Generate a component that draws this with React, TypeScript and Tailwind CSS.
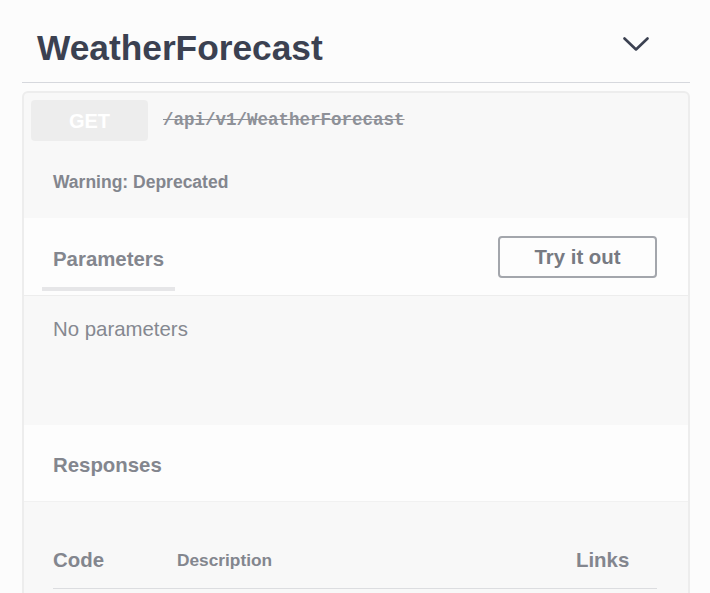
const Chevron = () => (
  <svg width="26" height="14" viewBox="0 0 26 14" fill="none">
    <polyline points="1.5,1.5 13,12.5 24.5,1.5" stroke="#3b4151" strokeWidth="2.6" strokeLinecap="round" strokeLinejoin="round" />
  </svg>
);

const App = () => {
  return (
    <div className="min-h-screen bg-[#fcfcfc] font-['Liberation_Sans',Arial,sans-serif]">
      <div className="mx-[22px] w-[668px]">
        {/* Tag header */}
        <div className="flex justify-between items-start h-[83px] pt-[30px] pl-[15px] pr-[41px] border-b border-[#d6d8dd]">
          <h3 className="text-[35.3px] leading-none font-bold text-[#3b4151]">WeatherForecast</h3>
          <div className="mt-[7px]">
            <Chevron />
          </div>
        </div>

        {/* Deprecated operation block */}
        <div className="mt-[8px] border-2 border-[#ededed] rounded-[6px] bg-[#f8f8f8] overflow-hidden">
          <div className="flex items-center pl-[7px] pt-[7px] pb-[9px]">
            <span className="flex items-center justify-center w-[117px] h-[41px] rounded-[4px] bg-[#ededed] text-white text-[20px] font-bold">
              GET
            </span>
            <span className="ml-[15px] font-['Liberation_Mono',monospace] font-bold text-[17.5px] text-[#8e9198] line-through">
              /api/v1/WeatherForecast
            </span>
          </div>

          <div className="h-[68px] pl-[29px] pt-[22px]">
            <p className="text-[17.5px] leading-[20px] font-bold text-[#83868e]">Warning: Deprecated</p>
          </div>

          {/* Parameters header */}
          <div className="flex justify-between h-[78px] pl-[18px] pr-[31px] bg-[#fdfdfd] border-b border-[#ededed]">
            <div className="flex flex-col px-[11px] pt-[31px]">
              <span className="text-[20.4px] leading-[20px] font-bold text-[#83868e]">Parameters</span>
              <div className="mt-[18px] h-[4px] bg-[#e6e6e8] -mx-[11px]" />
            </div>
            <button className="self-center mt-[1px] w-[159px] h-[42px] rounded-[4px] border-2 border-[#a3a6ac] text-[20.4px] font-bold text-[#777a82]">
              Try it out
            </button>
          </div>

          <div className="h-[129px] pl-[29px] pt-[23px]">
            <p className="text-[20.4px] leading-[20px] text-[#858890]">No parameters</p>
          </div>

          {/* Responses */}
          <div className="flex items-center h-[77px] pl-[29px] pt-[3px] bg-[#fdfdfd] border-b border-[#f1f1f1]">
            <h4 className="text-[20.4px] leading-[20px] font-bold text-[#83868e]">Responses</h4>
          </div>

          <div className="pl-[29px] pr-[31px] pt-[48px] pb-[40px]">
            <div className="flex items-center pb-[18px] border-b border-[#dcdde0] text-[#83868e] font-bold">
              <span className="w-[124px] text-[20.4px] leading-[20px]">Code</span>
              <span className="flex-1 text-[17.3px] leading-[20px]">Description</span>
              <span className="w-[81px] text-[20.4px] leading-[20px]">Links</span>
            </div>
            <div className="h-[80px]" />
          </div>
        </div>
      </div>
    </div>
  );
};

export default App;
